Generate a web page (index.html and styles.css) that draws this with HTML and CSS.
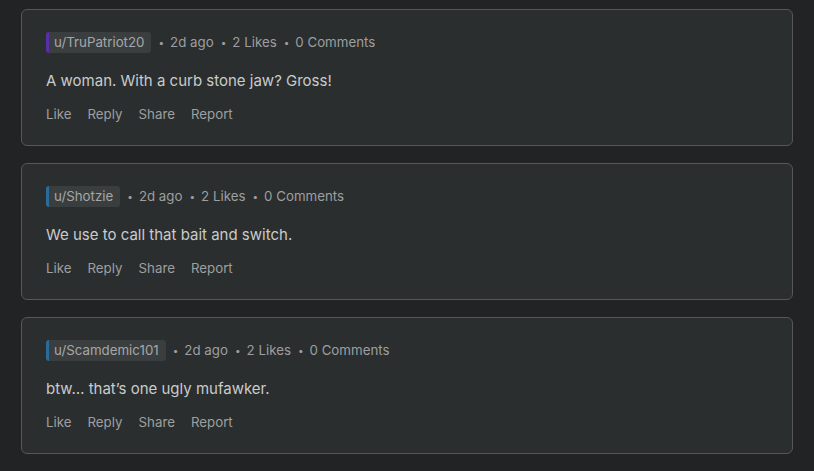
FILE: index.html
```html
<!DOCTYPE html>
<html lang="en">
<head>
<meta charset="utf-8">
<link rel="stylesheet" href="styles.css">
</head>
<body>
<div class="list">
  <div class="card">
    <div class="meta">
      <span class="user purple">u/TruPatriot20</span>
      <span class="dot">•</span><span>2d ago</span>
      <span class="dot">•</span><span>2 Likes</span>
      <span class="dot">•</span><span>0 Comments</span>
    </div>
    <p class="body">A woman. With a curb stone jaw? Gross!</p>
    <div class="actions"><span>Like</span><span>Reply</span><span>Share</span><span>Report</span></div>
  </div>
  <div class="card">
    <div class="meta">
      <span class="user blue">u/Shotzie</span>
      <span class="dot">•</span><span>2d ago</span>
      <span class="dot">•</span><span>2 Likes</span>
      <span class="dot">•</span><span>0 Comments</span>
    </div>
    <p class="body">We use to call that bait and switch.</p>
    <div class="actions"><span>Like</span><span>Reply</span><span>Share</span><span>Report</span></div>
  </div>
  <div class="card">
    <div class="meta">
      <span class="user blue">u/Scamdemic101</span>
      <span class="dot">•</span><span>2d ago</span>
      <span class="dot">•</span><span>2 Likes</span>
      <span class="dot">•</span><span>0 Comments</span>
    </div>
    <p class="body">btw… that’s one ugly mufawker.</p>
    <div class="actions"><span>Like</span><span>Reply</span><span>Share</span><span>Report</span></div>
  </div>
</div>
</body>
</html>
```
FILE: styles.css
```css
html, body {
  margin: 0;
  padding: 0;
  background: #222324;
  font-family: Inter, "Noto Sans", sans-serif;
}
.list {
  display: flex;
  flex-direction: column;
  gap: 17px;
  padding: 9px 21px 0 21px;
}
.card {
  background: #2b2e2e;
  border: 1px solid #555758;
  border-radius: 6px;
  padding: 21px 24px 21px 24px;
  display: flex;
  flex-direction: column;
}
.meta {
  display: flex;
  align-items: center;
  height: 22px;
  font-size: 13.3px;
  color: #9d9fa0;
}
.user {
  display: inline-flex;
  align-items: center;
  height: 21px;
  padding: 0 7px 0 5px;
  background: #3b3e3f;
  border-left: 3px solid #2a6b99;
  border-radius: 3px;
  color: #a5a7a8;
}
.user.purple { border-left-color: #5a2ea8; }
.dot {
  margin: 0 6px 0 7px;
  font-size: 10px;
}
.body {
  margin: 18px 0 0 0;
  font-size: 15px;
  line-height: 20px;
  color: #c9cbcc;
}
.actions {
  margin-top: 13px;
  display: flex;
  gap: 16px;
  font-size: 13.3px;
  line-height: 20px;
  color: #9d9fa0;
}
```
